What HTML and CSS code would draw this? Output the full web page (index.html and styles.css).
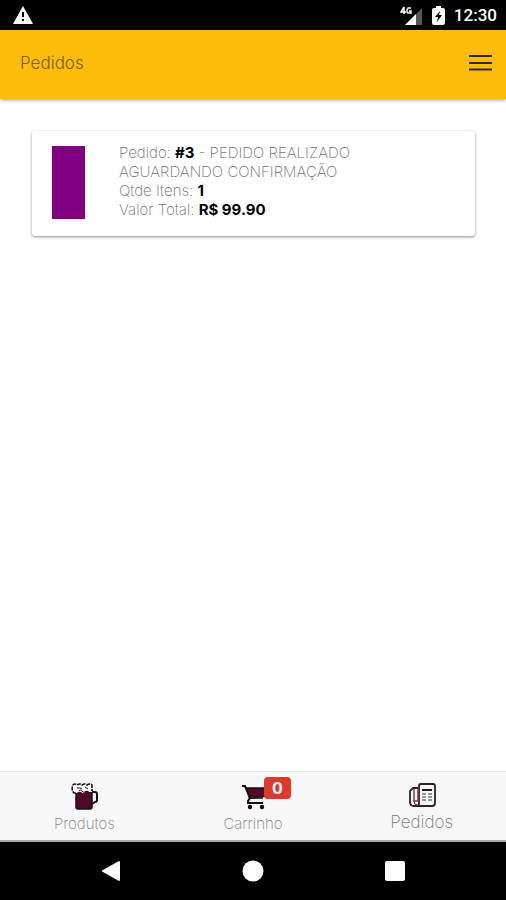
FILE: index.html
```html
<!DOCTYPE html>
<html lang="pt-BR">
<head>
<meta charset="utf-8">
<meta name="viewport" content="width=device-width, initial-scale=1">
<title>Pedidos</title>
<link rel="stylesheet" href="styles.css">
</head>
<body>
<div class="status">
  <svg class="status-alert" width="20" height="18" viewBox="0 0 20 18" aria-hidden="true"><path d="M10 0 20 18H0Z" fill="#fff"/><path d="M9 6h2v5H9zM9 13h2v2H9z" fill="#000"/></svg>
  <div class="status-right">
    <svg width="23" height="19" viewBox="0 0 23 19" aria-hidden="true"><path d="M22 2V19H5Z" fill="#555"/><path d="M16 8v11H5Z" fill="#fff"/><path d="M4 1 1 6h5M4 1v7M11 2H8L7 4v2l1 1h3V5H9" fill="none" stroke="#fff" stroke-width="1.5"/></svg>
    <svg width="13" height="19" viewBox="0 0 13 19" aria-hidden="true"><path d="M4 0h5v2h2q2 0 2 2v13q0 2-2 2H2q-2 0-2-2V4q0-2 2-2h2Z" fill="#fff"/><path d="M8 5 3 11h3l-1 5 5-7H7Z" fill="#000"/></svg>
    <span class="clock">12:30</span>
  </div>
</div>
<header class="header">
  <h1 class="title">Pedidos</h1>
  <button class="menu" type="button" aria-label="Menu">
    <svg width="24" height="18" viewBox="0 0 24 18" aria-hidden="true"><path d="M0 2h23M0 9h23M0 15.5h23" stroke="#33280a" stroke-width="2"/></svg>
  </button>
</header>
<main class="content">
  <article class="card">
    <div class="swatch"></div>
    <div class="details">
      <p>Pedido: <b>#3</b> - PEDIDO REALIZADO AGUARDANDO CONFIRMAÇÃO</p>
      <p>Qtde Itens: <b>1</b></p>
      <p>Valor Total: <b>R$ 99.90</b></p>
    </div>
  </article>
</main>
<nav class="tabs">
  <a class="tab" href="#produtos">
    <svg width="28" height="28" viewBox="0 0 28 28" aria-hidden="true"><path d="M6 8h16v16q0 2-2 2H8q-2 0-2-2Z" fill="#4d0b2c" stroke="#1b0c16" stroke-width="1.5"/><path d="M22 9h3q2 0 2 2v6q0 2-2 2l-3 2" fill="none" stroke="#1b0c16" stroke-width="2"/><path d="M3 2q2-2 4 0 3-2 5 0 3-2 5 0 3-2 5 0 1 3 0 7h-3q-1-2-3-1-2 4-5 1-3-1-4 1H4Q1 7 3 2Z" fill="#fff"/><path d="M6 10H4Q1 7 3 2q2-2 4 0 3-2 5 0 3-2 5 0 3-2 5 0v6" fill="none" stroke="#1b0c16" stroke-width="1.6" stroke-dasharray="4 1"/><path d="M7 5h3l2 1M15 4l3 2M9 8q1-2 3 0 2 3 4 0" fill="none" stroke="#1b0c16"/></svg>
    <span>Produtos</span>
  </a>
  <a class="tab" href="#carrinho">
    <span class="cart">
      <svg width="28" height="28" viewBox="0 0 28 28" aria-hidden="true"><path d="M7 5h20v9l-17 2Z" fill="#4d0b2c"/><path d="M3 3h3l5 12-2 3v2h15" fill="none" stroke="#1b0c16" stroke-width="2"/><path d="M7 5h19M11 15h13" fill="none" stroke="#1b0c16" stroke-width="1.5"/><circle cx="11" cy="24" r="2.2" fill="#1b0c16"/><circle cx="23" cy="24" r="2.2" fill="#1b0c16"/></svg>
      <span class="badge">0</span>
    </span>
    <span>Carrinho</span>
  </a>
  <a class="tab active" href="#pedidos" aria-current="page">
    <svg width="28" height="28" viewBox="0 0 28 28" aria-hidden="true"><path d="M10 5H5L2 8v11q0 4 4 4h18q3 0 3-3V3q0-2-2-2H13q-2 0-2 2v17q0 3-2 3" fill="#f7f7f7" stroke="#2d2029" stroke-width="1.8"/><path d="M6 6v12h4V5" fill="none" stroke="#873653" stroke-width="1.5"/><path d="M6 18q0 4 3 4" fill="none" stroke="#2d2029"/><path d="M14 7h10" stroke="#201820" stroke-width="2"/><path d="M14 11h4M20 11h4M14 14h4M20 14h4M14 17h4M20 17h4" stroke="#777" stroke-width="1.5"/></svg>
    <span>Pedidos</span>
  </a>
</nav>
<div class="system">
  <button type="button" aria-label="Voltar"><svg width="22" height="22" viewBox="0 0 22 22"><path d="M19 2v18L3 11Z" fill="#fff" stroke="#fff" stroke-width="2" stroke-linejoin="round"/></svg></button>
  <button type="button" aria-label="Início"><svg width="22" height="22" viewBox="0 0 22 22"><circle cx="11" cy="11" r="10.5" fill="#fff"/></svg></button>
  <button type="button" aria-label="Recentes"><svg width="22" height="22" viewBox="0 0 22 22"><rect x="1" y="1" width="20" height="20" rx="2" fill="#fff"/></svg></button>
</div>
</body>
</html>
```
FILE: styles.css
```css
* { box-sizing: border-box; }
body {
  margin: 0;
  min-height: 100vh;
  display: flex;
  flex-direction: column;
  background: #fff;
  color: #707070;
  font-family: Inter, "Liberation Sans", sans-serif;
  font-weight: 200;
}
svg { display: block; }
button { padding: 0; border: 0; background: none; cursor: pointer; }

.status {
  height: 30px;
  padding: 0 9px 0 13px;
  display: flex;
  align-items: center;
  justify-content: space-between;
  background: #000;
  color: #fff;
}
.status-right { display: flex; align-items: center; gap: 9px; }
.clock { font: 500 17px/20px Roboto, sans-serif; }

.header {
  height: 69px;
  padding: 0 13px 3px 20px;
  display: flex;
  align-items: center;
  justify-content: space-between;
  background: #fcbc09;
  box-shadow: 0 1px 4px rgba(0, 0, 0, .4);
}
.title { margin: 0; font-size: 17px; line-height: 24px; font-weight: 300; color: #7d6016; }

.content { flex: 1; padding: 32px 31px 32px 32px; }
.card {
  display: flex;
  gap: 34px;
  padding: 12px 20px 17px;
  border-radius: 3px;
  background: #fff;
  box-shadow: 0 1px 3px rgba(0, 0, 0, .45);
}
.swatch { width: 33px; height: 73px; margin-top: 3px; flex: none; background: #800080; }
.details { max-width: 260px; font-size: 15px; line-height: 19px; }
.details p { margin: 0; }
.details b { font-weight: 700; color: #000; }

.tabs {
  height: 71px;
  display: grid;
  grid-template-columns: repeat(3, 1fr);
  background: #f7f7f7;
  border-top: 1px solid #e4e4e4;
  border-bottom: 2px solid #aaa;
}
.tab {
  display: flex;
  flex-direction: column;
  align-items: center;
  gap: 3px;
  padding-top: 11px;
  color: #858585;
  font-size: 15px;
  line-height: 20px;
  text-decoration: none;
}
.active { gap: 1px; font-size: 17px; color: #777; }
.cart { position: relative; }
.badge {
  position: absolute;
  left: 25px;
  top: -6px;
  width: 27px;
  border-radius: 4px;
  background: #df382c;
  color: #fff;
  font-size: 16px;
  line-height: 22px;
  font-weight: 700;
  text-align: center;
}

.system {
  height: 58px;
  padding: 0 40px;
  display: flex;
  align-items: center;
  background: #000;
}
.system button { flex: 1; display: flex; justify-content: center; }
```
